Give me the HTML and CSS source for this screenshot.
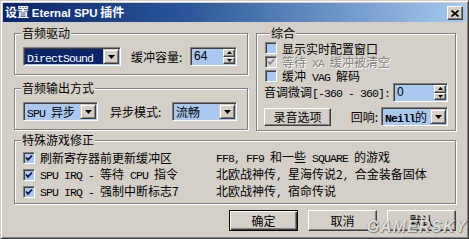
FILE: index.html
```html
<!DOCTYPE html>
<html lang="zh">
<head>
<meta charset="utf-8">
<title>设置 Eternal SPU 插件</title>
<link rel="stylesheet" href="styles.css">
</head>
<body>
<div class="window">
  <div class="titlebar">
    <span class="title">设置 <span class="tl">Eternal SPU</span> 插件</span>
    <span class="close"><svg width="8" height="7" viewBox="0 0 8 7"><path d="M0.5 0.5L7.5 6.5M7.5 0.5L0.5 6.5" stroke="#000" stroke-width="1.7"/></svg></span>
  </div>
  <div class="content">
    <div class="top">
      <div class="leftcol">
        <div class="group g1">
          <div class="legend">音频驱动</div>
          <div class="row">
            <div class="combo c-ds"><div class="val sel"><span class="m">DirectSound</span></div><div class="dd"><svg width="7" height="4" viewBox="0 0 7 4"><polygon points="0,0 7,0 3.5,4"/></svg></div></div>
            <span class="lbl lbl-buf">缓冲容量:</span>
            <div class="spin s-buf"><div class="val sv">64</div><div class="sb"><span class="sbb"><svg width="5" height="3" viewBox="0 0 5 3"><polygon points="2.5,0 5,3 0,3"/></svg></span><span class="sbb"><svg width="5" height="3" viewBox="0 0 5 3"><polygon points="0,0 5,0 2.5,3"/></svg></span></div></div>
          </div>
        </div>
        <div class="group g2">
          <div class="legend">音频输出方式</div>
          <div class="row">
            <div class="combo c-spu"><div class="val"><span class="m">SPU </span>异步</div><div class="dd"><svg width="7" height="4" viewBox="0 0 7 4"><polygon points="0,0 7,0 3.5,4"/></svg></div></div>
            <span class="lbl lbl-mode">异步模式:</span>
            <div class="combo c-mode"><div class="val">流畅</div><div class="dd"><svg width="7" height="4" viewBox="0 0 7 4"><polygon points="0,0 7,0 3.5,4"/></svg></div></div>
          </div>
        </div>
      </div>
      <div class="group g3">
        <div class="legend">综合</div>
        <div class="cbrows">
          <div class="cbrow"><span class="cb"></span><span class="cbt">显示实时配置窗口</span></div>
          <div class="cbrow dis"><span class="cb"><svg width="8" height="8" viewBox="0 0 8 8"><polyline points="1,3.5 3,5.8 7,1.5" fill="none" stroke="#8a8a8a" stroke-width="1.8"/></svg></span><span class="cbt">等待<span class="m"> XA </span>缓冲被清空</span></div>
          <div class="cbrow"><span class="cb"></span><span class="cbt">缓冲<span class="m"> VAG </span>解码</span></div>
        </div>
        <div class="prow">
          <span class="lbl">音调微调<span class="m">[-360 - 360]:</span></span>
          <div class="spin s-pitch"><div class="val sv">0</div><div class="sb"><span class="sbb"><svg width="5" height="3" viewBox="0 0 5 3"><polygon points="2.5,0 5,3 0,3"/></svg></span><span class="sbb"><svg width="5" height="3" viewBox="0 0 5 3"><polygon points="0,0 5,0 2.5,3"/></svg></span></div></div>
        </div>
        <div class="brow">
          <span class="btn btn-rec">录音选项</span>
          <span class="lbl lbl-echo">回响:</span>
          <div class="combo c-echo"><div class="val"><span class="m mb">Neill</span>的</div><div class="dd"><svg width="7" height="4" viewBox="0 0 7 4"><polygon points="0,0 7,0 3.5,4"/></svg></div></div>
        </div>
      </div>
    </div>
    <div class="group g4">
      <div class="legend">特殊游戏修正</div>
      <div class="fixes">
        <div class="fixrow">
          <span class="fx"><span class="cb"><svg width="8" height="8" viewBox="0 0 8 8"><polyline points="1,3.5 3,5.8 7,1.5" fill="none" stroke="#10104a" stroke-width="1.8"/></svg></span><span class="cbt">刷新寄存器前更新缓冲区</span></span>
          <span class="desc"><span class="m">FF8, FF9 </span>和一些<span class="m"> SQUARE </span>的游戏</span>
        </div>
        <div class="fixrow">
          <span class="fx"><span class="cb"><svg width="8" height="8" viewBox="0 0 8 8"><polyline points="1,3.5 3,5.8 7,1.5" fill="none" stroke="#10104a" stroke-width="1.8"/></svg></span><span class="cbt"><span class="m">SPU IRQ - </span>等待<span class="m"> CPU </span>指令</span></span>
          <span class="desc">北欧战神传<span class="m">, </span>星海传说2<span class="m">, </span>合金装备固体</span>
        </div>
        <div class="fixrow">
          <span class="fx"><span class="cb"><svg width="8" height="8" viewBox="0 0 8 8"><polyline points="1,3.5 3,5.8 7,1.5" fill="none" stroke="#10104a" stroke-width="1.8"/></svg></span><span class="cbt"><span class="m">SPU IRQ - </span>强制中断标志7</span></span>
          <span class="desc">北欧战神传<span class="m">, </span>宿命传说</span>
        </div>
      </div>
    </div>
    <div class="btns">
      <span class="btn btn-main def">确定</span>
      <span class="btn btn-main">取消</span>
      <span class="btn btn-main">默认</span>
    </div>
  </div>
  <div class="watermark">GAMERSKY</div>
</div>
</body>
</html>
```

FILE: styles.css
```css
* { box-sizing: border-box; }
html, body { margin: 0; padding: 0; }
body {
  width: 469px;
  height: 239px;
  overflow: hidden;
  background: #d4d0c8;
  font-family: "Noto Sans CJK SC", "Liberation Sans", sans-serif;
  font-size: 12px;
  line-height: 14px;
  color: #000;
}
.window {
  position: relative;
  width: 469px;
  height: 239px;
  padding: 2px;
  background: #d4d0c8;
  border: 1px solid;
  border-color: #d4d0c8 #404040 #404040 #d4d0c8;
  box-shadow: inset 1px 1px #fff, inset -1px -1px #808080;
  overflow: hidden;
}
.titlebar {
  height: 19px;
  display: flex;
  align-items: center;
  justify-content: space-between;
  padding: 0 3px 0 2px;
  background: linear-gradient(to right, #0a246a 0%, #2a5898 40%, #a6caf0 100%);
}
.title {
  color: #fff;
  font-weight: bold;
  font-size: 12px;
  line-height: 14px;
}
.title .tl {
  font-family: "Liberation Sans", sans-serif;
  font-size: 11.5px;
}
.close {
  width: 16px;
  height: 14px;
  margin-top: 1px;
  display: flex;
  align-items: center;
  justify-content: center;
  background: #d4d0c8;
  border: 1px solid;
  border-color: #fff #404040 #404040 #fff;
  box-shadow: inset -1px -1px #808080;
}
.content {
  padding: 0 10px 0 11px;
}
.m {
  font-family: "Liberation Mono", monospace;
  font-size: 11.5px;
  letter-spacing: -0.9px;
}
.mb { font-weight: bold; }
.top {
  display: grid;
  grid-template-columns: 234px 200px;
  column-gap: 8px;
  align-items: start;
  margin-top: 11px;
}
.group {
  border: 1px solid #808080;
  box-shadow: inset 1px 1px #fff, 1px 1px #fff;
}
.legend {
  width: max-content;
  height: 14px;
  margin: -8px 0 0 6px;
  padding: 0 1px;
  background: #d4d0c8;
  line-height: 14px;
}
.g1, .g2 { height: 42px; }
.g2 { margin-top: 13px; }
.row {
  display: flex;
  align-items: center;
  height: 19px;
  margin-top: 7px;
  padding: 0 10px 0 8px;
}
.lbl { white-space: nowrap; }
.lbl-buf { margin-left: 10px; }
.lbl-mode { margin-left: 12px; }
.combo {
  display: flex;
  height: 19px;
  padding: 1px;
  border: 1px solid;
  border-color: #808080 #fff #fff #808080;
  box-shadow: inset 1px 1px #404040;
  background: #aac8f0;
}
.combo .val, .spin .val {
  flex: 1;
  min-width: 0;
  padding-left: 2px;
  line-height: 15px;
  white-space: nowrap;
  overflow: hidden;
  background: #aac8f0;
}
.combo .val.sel {
  background: #0a246a;
  color: #fff;
}
.dd {
  width: 16px;
  height: 15px;
  display: flex;
  align-items: center;
  justify-content: center;
  background: #d4d0c8;
  border: 1px solid;
  border-color: #d4d0c8 #404040 #404040 #d4d0c8;
  box-shadow: inset 1px 1px #fff, inset -1px -1px #808080;
}
.c-ds { width: 98px; }
.c-spu { width: 75px; }
.c-mode { width: 65px; margin-left: auto; }
.c-echo { width: 67px; margin-left: 3px; }
.spin {
  display: flex;
  height: 19px;
  padding: 1px;
  border: 1px solid;
  border-color: #808080 #fff #fff #808080;
  box-shadow: inset 1px 1px #404040;
  background: #aac8f0;
}
.spin .sv {
  font-family: "Liberation Sans", sans-serif;
  font-size: 12px;
}
.s-buf { width: 47px; margin-left: auto; }
.s-pitch { width: 55px; margin-left: auto; }
.sb {
  width: 12px;
  display: flex;
  flex-direction: column;
}
.sbb {
  flex: 1;
  display: flex;
  align-items: center;
  justify-content: center;
  background: #d4d0c8;
  border: 1px solid;
  border-color: #fff #404040 #404040 #fff;
  box-shadow: inset -1px -1px #808080;
}
.g3 {
  height: 98px;
  padding: 0 7px;
}
.cbrows { margin-top: 1px; }
.cbrow {
  display: flex;
  align-items: center;
  height: 14px;
}
.cb {
  width: 12px;
  height: 12px;
  flex: none;
  display: flex;
  align-items: center;
  justify-content: center;
  background: #aac8f0;
  border: 1px solid;
  border-color: #808080 #fff #fff #808080;
  box-shadow: inset 1px 1px #404040;
}
.cbrows .cb { margin-left: 1px; }
.cbt {
  margin-left: 5px;
  white-space: nowrap;
  line-height: 13px;
}
.dis .cb { background: #d8d8dc; }
.dis .cbt {
  color: #808080;
  text-shadow: 1px 1px 0 #fff;
}
.prow {
  display: flex;
  align-items: center;
  height: 19px;
}
.brow {
  display: flex;
  align-items: center;
  height: 19px;
  margin-top: 5px;
}
.btn {
  display: flex;
  align-items: center;
  justify-content: center;
  background: #d4d0c8;
  border: 1px solid;
  border-color: #fff #404040 #404040 #fff;
  box-shadow: inset -1px -1px #808080;
  white-space: nowrap;
}
.btn-rec { width: 67px; height: 18px; }
.lbl-echo { margin-left: auto; }
.g4 {
  height: 64px;
  margin-top: 9px;
}
.fixes {
  margin-top: 2px;
  padding-left: 8px;
}
.fixrow {
  display: grid;
  grid-template-columns: 193px 1fr;
  align-items: center;
  height: 17px;
}
.fx {
  display: flex;
  align-items: center;
}
.desc { white-space: nowrap; }
.btns {
  display: flex;
  justify-content: flex-end;
  gap: 10px;
  margin-top: 6px;
}
.btn-main { width: 69px; height: 21px; }
.btn.def {
  border-color: #000;
  box-shadow: inset 1px 1px #fff, inset -1px -1px #404040, inset -2px -2px #808080;
}
.watermark {
  position: absolute;
  right: 1px;
  bottom: 3px;
  font-family: "Liberation Sans", sans-serif;
  font-style: italic;
  font-weight: bold;
  font-size: 16px;
  line-height: 16px;
  letter-spacing: 1px;
  color: rgba(255, 255, 255, 0.8);
  text-shadow: 0 0 1px rgba(60, 60, 60, 0.7), 1px 1px 1px rgba(0, 0, 0, 0.35);
  pointer-events: none;
}
```
